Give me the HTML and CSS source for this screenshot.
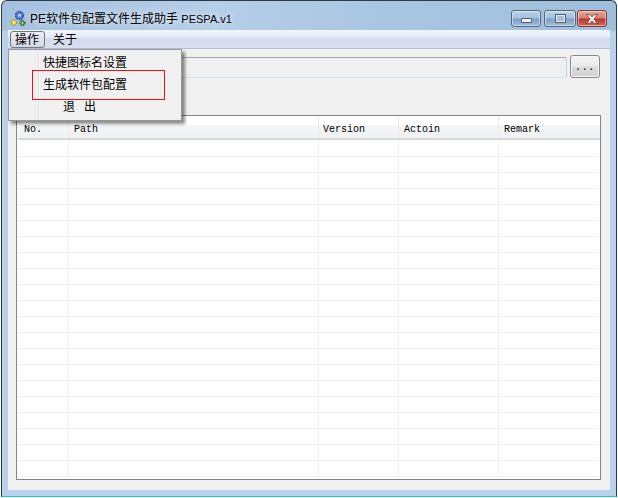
FILE: index.html
```html
<!DOCTYPE html>
<html lang="zh">
<head>
<meta charset="utf-8">
<title>PE软件包配置文件生成助手 PESPA.v1</title>
<link rel="stylesheet" href="styles.css">
</head>
<body>
<div class="window">
  <div class="titlebar">
    <svg class="app-icon" width="17" height="17" viewBox="0 0 17 17">
      <circle cx="9.5" cy="5.5" r="4" fill="#5577d8" stroke="#2f4ba0" stroke-width="1.4" stroke-dasharray="1.6 1"/>
      <circle cx="9.5" cy="5.5" r="1.4" fill="#cfe0ff"/>
      <circle cx="4" cy="12.5" r="2.8" fill="#e8d04a" stroke="#a5902a" stroke-width="1.2" stroke-dasharray="1.4 .9"/>
      <circle cx="4" cy="12.5" r="1" fill="#fff8c8"/>
      <circle cx="12.5" cy="13" r="2.5" fill="#5aa04e" stroke="#2f6b2a" stroke-width="1.2" stroke-dasharray="1.4 .9"/>
      <circle cx="12.5" cy="13" r="0.8" fill="#d7f0cf"/>
    </svg>
    <span class="title">PE软件包配置文件生成助手 <span class="title-latin">PESPA.v1</span></span>
    <div class="controls">
      <div class="ctl ctl-min"><span class="glyph-min"></span></div>
      <div class="ctl ctl-max"><span class="glyph-max"></span></div>
      <div class="ctl ctl-close">
        <svg width="18" height="12" viewBox="0 0 18 12"><path d="M3.5 1.5h3.2L9 3.7l2.3-2.2h3.2L11 6l3.500 4.500h-3.200L9 8.300l-2.300 2.200H3.500L7 6z" fill="#f4ecec" stroke="#6d2a22" stroke-width=".7"/></svg>
      </div>
    </div>
  </div>
  <div class="client">
    <div class="menubar">
      <span class="menu-item menu-active">操作</span>
      <span class="menu-item">关于</span>
    </div>
    <div class="body">
      <div class="path-row">
        <div class="path-input"></div>
        <div class="browse">...</div>
      </div>
      <div class="list">
        <div class="row head">
          <div class="cell c1">No.</div>
          <div class="cell c2">Path</div>
          <div class="cell c3">Version</div>
          <div class="cell c4">Actoin</div>
          <div class="cell c5">Remark</div>
        </div>
        <div class="rows" id="rows"></div>
      </div>
    </div>
  </div>
  <div class="popup">
    <div class="popup-item">快捷图标名设置</div>
    <div class="popup-item">生成软件包配置</div>
    <div class="popup-item popup-exit">退&nbsp;&nbsp;出</div>
    <div class="highlight"></div>
  </div>
</div>
<script src="app.js"></script>
</body>
</html>
```
FILE: styles.css
```css
* { box-sizing: border-box; }
html, body { margin: 0; padding: 0; }
body {
  width: 618px;
  height: 498px;
  overflow: hidden;
  background: #fff;
  padding: 0 1px;
  font: 12px "Liberation Sans", "Noto Sans CJK SC", sans-serif;
  color: #000;
}
.window {
  position: relative;
  width: 616px;
  height: 497px;
  display: flex;
  flex-direction: column;
  padding: 0 6px 6px 6px;
  background: #b8d2ec linear-gradient(90deg, #a4c1de 0, #b6cfe8 35%, #a9c6e2 60%, #9fbfdd 100%) no-repeat;
  background-size: 100% 30px;
  border: 1px solid #2c3a44;
  border-bottom-color: #27c3d8;
  border-radius: 6px 6px 0 0;
}
.titlebar {
  height: 29px;
  flex: none;
  display: flex;
  align-items: flex-start;
  position: relative;
}
.app-icon { flex: none; margin: 9px 3px 0 2px; }
.title { font-size: 12px; line-height: 14px; margin-top: 11px; white-space: nowrap; text-shadow: 0 0 6px #fff; }
.title-latin { font-size: 11px; }
.controls {
  margin-left: auto;
  margin-right: 3px;
  margin-top: 9px;
  display: flex;
  gap: 3px;
}
.ctl {
  height: 17px;
  border: 1px solid #56677d;
  border-radius: 3px;
  display: flex;
  align-items: center;
  justify-content: center;
  box-shadow: inset 0 0 0 1px rgba(255,255,255,.45);
  background: linear-gradient(#bdd3e9 0, #a4c0dc 48%, #7da0c3 52%, #9dbcd9 100%);
}
.ctl-min { width: 30px; }
.ctl-max { width: 32px; margin-right: -2px; }
.ctl-close {
  width: 30px;
  border-color: #7b3a33;
  background: linear-gradient(#e5a79d 0, #d87f72 48%, #bb3526 52%, #cf6a58 100%);
}
.glyph-min {
  width: 11px; height: 5px; margin-top: 3px;
  background: #eef3f8; border: 1px solid #4d5f75; border-radius: 1px;
}
.glyph-max {
  width: 11px; height: 9px;
  border: 2px solid #e9eff6;
  outline: 1px solid #4d5f75;
  outline-offset: -1px;
  background: #a7c0da;
}
.client {
  flex: 1;
  display: flex;
  flex-direction: column;
  min-height: 0;
  background: #f0f0f0;
}
.menubar {
  height: 19px;
  flex: none;
  display: flex;
  align-items: center;
  padding-left: 2px;
  gap: 3px;
  background: linear-gradient(#f2f5fb 0, #e6ebf6 40%, #d5dcee 45%, #d8deef 100%);
  border-bottom: 1px solid #b5bdd4;
}
.menu-item {
  height: 17px;
  padding: 0 5px 0 4px;
  line-height: 16px;
  border: 1px solid transparent;
}
.menu-active {
  border: 1px solid #6d7786;
  border-radius: 3px;
  background: linear-gradient(#eef0f4, #d4d8e2);
}
.body {
  flex: 1;
  display: flex;
  flex-direction: column;
  padding: 6px 9px 10px 8px;
  min-height: 0;
}
.path-row {
  display: flex;
  align-items: flex-start;
  gap: 3px;
  height: 60px;
  flex: none;
}
.path-input {
  flex: 1;
  height: 21px;
  margin-top: 2px;
  background: #f0f0f0;
  border: 1px solid #aebccb;
  border-top-color: #a2a8ad;
  border-right-color: #bcd5ea;
  border-bottom-color: #cfe3f1;
  border-radius: 2px;
}
.browse {
  flex: none;
  width: 30px;
  height: 23px;
  margin-right: 1px;
  border: 1px solid #8a8a8a;
  border-radius: 3px;
  font: 10px "Liberation Mono", monospace;
  letter-spacing: .7px;
  line-height: 23px;
  text-align: center;
  white-space: nowrap;
  box-shadow: inset 0 0 0 1px #f6f6f6;
  background: linear-gradient(#f2f2f2 0, #ebebeb 48%, #dcdcdc 52%, #d2d2d2 100%);
}
.list {
  flex: 1;
  min-height: 0;
  display: flex;
  flex-direction: column;
  background: #fff;
  border: 1px solid #82858a;
  padding-left: 1px;
  overflow: hidden;
}
.row { display: flex; flex: none; }
.head {
  height: 24px;
  border-bottom: 2px solid #d7d8da;
  background: linear-gradient(#fff 0, #fff 40%, #f3f4f6 45%, #f1f2f4 100%);
}
.cell {
  flex: none;
  height: 100%;
  border-right: 1px solid #e9eaec;
  font: 10px/27px "Liberation Mono", monospace;
  padding-left: 5px;
  white-space: nowrap;
}
.c1 { width: 51px; padding-left: 6px; }
.c2 { width: 250px; }
.c3 { width: 80px; padding-left: 4px; }
.c4 { width: 100px; }
.c5 { width: 99px; border-right: 0; }
.rows { flex: 1; min-height: 0; overflow: hidden; padding-top: 1px; }
.data { height: 16px; }
.data .cell { border-bottom: 1px solid #f0f0f0; border-right: 1px solid #f0f0f0; }
.data .c5 { border-right: 0; }
.popup {
  position: absolute;
  left: 6px;
  top: 48px;
  width: 174px;
  height: 72px;
  padding: 2px 0 0 34px;
  background: linear-gradient(90deg, #f0f0f0 0, #f0f0f0 29px, #e2e3e3 29px, #e2e3e3 30px, #fff 30px, #f0f0f0 31px);
  border: 1px solid #979797;
  box-shadow: 3px 3px 3px rgba(0,0,0,.45);
}
.popup-item { height: 22px; line-height: 22px; font-size: 12px; white-space: nowrap; }
.popup-exit { padding-left: 20px; letter-spacing: .75px; }
.highlight {
  position: absolute;
  left: 23px;
  top: 20px;
  width: 133px;
  height: 30px;
  border: 1px solid #ee1111;
}
```
FILE: app.js
```js
var rows = document.getElementById('rows');
var html = '';
for (var i = 0; i < 21; i++) {
  html += '<div class="row data"><div class="cell c1"></div><div class="cell c2"></div><div class="cell c3"></div><div class="cell c4"></div><div class="cell c5"></div></div>';
}
rows.innerHTML = html;
```
